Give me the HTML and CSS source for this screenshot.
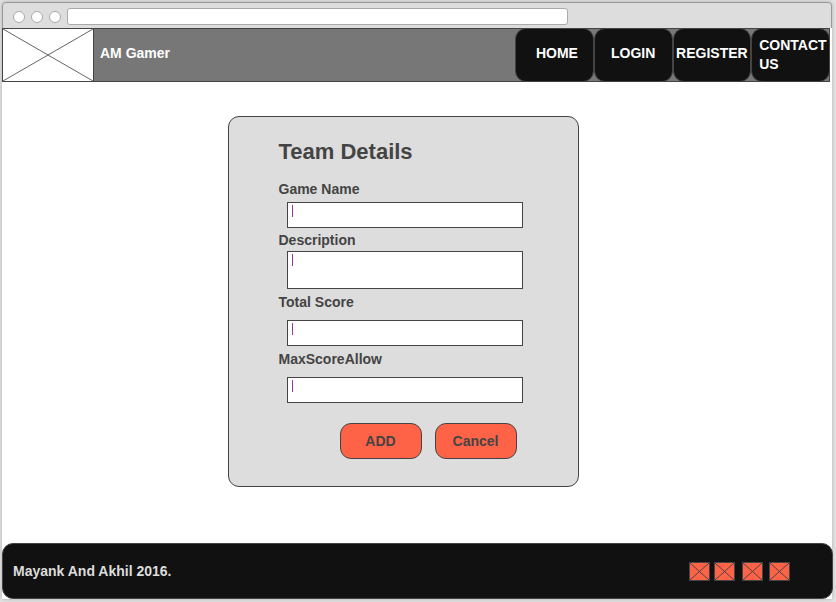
FILE: index.html
```html
<!DOCTYPE html>
<html lang="en">
<head>
<meta charset="utf-8">
<meta name="viewport" content="width=device-width, initial-scale=1">
<title>AM Gamer</title>
<link rel="stylesheet" href="styles.css">
</head>
<body>
<div class="window">
  <div class="toolbar">
    <span class="dot"></span>
    <span class="dot"></span>
    <span class="dot"></span>
    <input class="address" type="text" aria-label="Address">
  </div>
  <header class="header">
    <svg class="logo" viewBox="0 0 92 54" aria-hidden="true">
      <rect x="0.5" y="0.5" width="91" height="53"/>
      <path d="M1 1L91 53M91 1L1 53"/>
    </svg>
    <span class="brand">AM Gamer</span>
    <nav class="nav">
      <a class="nav-link" href="#">HOME</a>
      <a class="nav-link" href="#">LOGIN</a>
      <a class="nav-link" href="#">REGISTER</a>
      <a class="nav-link nav-link-wrap" href="#">CONTACT US</a>
    </nav>
  </header>
  <main class="main">
    <form class="card">
      <h1 class="title">Team Details</h1>
      <div class="field">
        <label for="game">Game Name</label>
        <input class="control" id="game" type="text">
      </div>
      <div class="field field-tight">
        <label for="description">Description</label>
        <textarea class="control control-tall" id="description"></textarea>
      </div>
      <div class="field field-loose">
        <label for="total">Total Score</label>
        <input class="control" id="total" type="text">
      </div>
      <div class="field field-loose">
        <label for="max">MaxScoreAllow</label>
        <input class="control" id="max" type="text">
      </div>
      <div class="actions">
        <button class="button" type="button">ADD</button>
        <button class="button" type="button">Cancel</button>
      </div>
    </form>
  </main>
  <footer class="footer">
    <span>Mayank And Akhil 2016.</span>
    <div class="social">
      <div class="social-pair">
        <a href="#"><svg class="social-icon" viewBox="0 0 21 19"><rect x="0.5" y="0.5" width="20" height="18"/><path d="M1 1L20 18M20 1L1 18"/></svg></a>
        <a href="#"><svg class="social-icon" viewBox="0 0 21 19"><rect x="0.5" y="0.5" width="20" height="18"/><path d="M1 1L20 18M20 1L1 18"/></svg></a>
      </div>
      <div class="social-pair social-pair-wide">
        <a href="#"><svg class="social-icon" viewBox="0 0 21 19"><rect x="0.5" y="0.5" width="20" height="18"/><path d="M1 1L20 18M20 1L1 18"/></svg></a>
        <a href="#"><svg class="social-icon" viewBox="0 0 21 19"><rect x="0.5" y="0.5" width="20" height="18"/><path d="M1 1L20 18M20 1L1 18"/></svg></a>
      </div>
    </div>
  </footer>
</div>
</body>
</html>
```
FILE: styles.css
```css
* {
  box-sizing: border-box;
}

body {
  margin: 0;
  padding: 2px 4px 3px 2px;
  min-height: 100vh;
  display: flex;
  background: #e4e4e4;
  color: #444;
  font: bold 14px/16px "Liberation Sans", Arial, sans-serif;
}

.window {
  flex: 1;
  display: flex;
  flex-direction: column;
  background: #fff;
  border-radius: 4px 4px 0 0;
  box-shadow: 0 0 4px #aaa;
}

.toolbar {
  display: flex;
  align-items: center;
  gap: 6px;
  height: 26px;
  padding: 2px 10px 0;
  background: #ddd;
  border: 1px solid #999;
  border-bottom: 0;
  border-radius: 4px 4px 0 0;
}

.dot {
  width: 12px;
  height: 12px;
  background: #fff;
  border: 1px solid #aaa;
  border-radius: 50%;
}

.address {
  width: 62%;
  height: 17px;
  padding: 0 4px;
  background: #fff;
  border: 1px solid #aaa;
  border-radius: 3px;
}

.header {
  display: flex;
  align-items: center;
  margin-right: 2px;
  background: #777;
  box-shadow: inset 0 0 0 1px #444;
}

.logo {
  width: 92px;
  height: 54px;
  fill: #fff;
  stroke: #444;
}

.logo path {
  stroke: #666;
}

.brand {
  flex: 1;
  padding: 0 6px 4px;
  color: #fff;
}

.nav {
  display: grid;
  grid-template-columns: repeat(4, 1fr);
  width: 315px;
}

.nav-link {
  display: flex;
  align-items: center;
  justify-content: center;
  min-width: 0;
  height: 54px;
  padding: 0 2px 4px;
  background: #111;
  border: 1px solid #444;
  border-radius: 11px;
  color: #fff;
  line-height: 19px;
  text-decoration: none;
}

.nav-link:first-child {
  padding-left: 7px;
}

.nav-link-wrap {
  padding: 0 2px 0 7px;
}

.main {
  flex: 1;
  display: flex;
  justify-content: center;
  align-items: flex-start;
  padding: 34px 28px 56px 0;
}

.card {
  width: 351px;
  padding: 21px 55px 27px 50px;
  background: #ddd;
  border: 1px solid #444;
  border-radius: 11px;
}

.title {
  margin: 0 0 15px;
  font-size: 22px;
  line-height: 28px;
}

.field {
  display: flex;
  flex-direction: column;
  gap: 5px;
  margin-bottom: 4px;
}

.field-tight {
  gap: 3px;
}

.field-loose {
  gap: 10px;
  padding-top: 1px;
}

.control {
  height: 26px;
  margin: 0 0 0 8px;
  padding: 2px 6px;
  border: 1px solid #444;
  border-radius: 0;
  background: linear-gradient(#939, #939) 4px 2px / 1px 12px no-repeat #fff;
  color: #444;
  font: inherit;
  resize: none;
}

.control-tall {
  height: 38px;
}

.actions {
  display: flex;
  justify-content: flex-end;
  gap: 13px;
  padding: 16px 6px 0 0;
}

.button {
  width: 82px;
  height: 36px;
  padding: 0;
  background: #ff6347;
  border: 1px solid #444;
  border-radius: 11px;
  color: #444;
  font: inherit;
}

.footer {
  display: flex;
  align-items: center;
  justify-content: space-between;
  height: 56px;
  margin-right: -1px;
  padding: 0 42px 0 10px;
  background: #111;
  border: 1px solid #444;
  border-radius: 11px;
  color: #ddd;
}

.social,
.social-pair {
  display: flex;
  align-items: center;
}

.social {
  gap: 7px;
}

.social-pair {
  gap: 4px;
}

.social-pair-wide {
  gap: 6px;
}

.social-icon {
  display: block;
  width: 21px;
  height: 19px;
  fill: #ff6347;
  stroke: #444;
}
```
